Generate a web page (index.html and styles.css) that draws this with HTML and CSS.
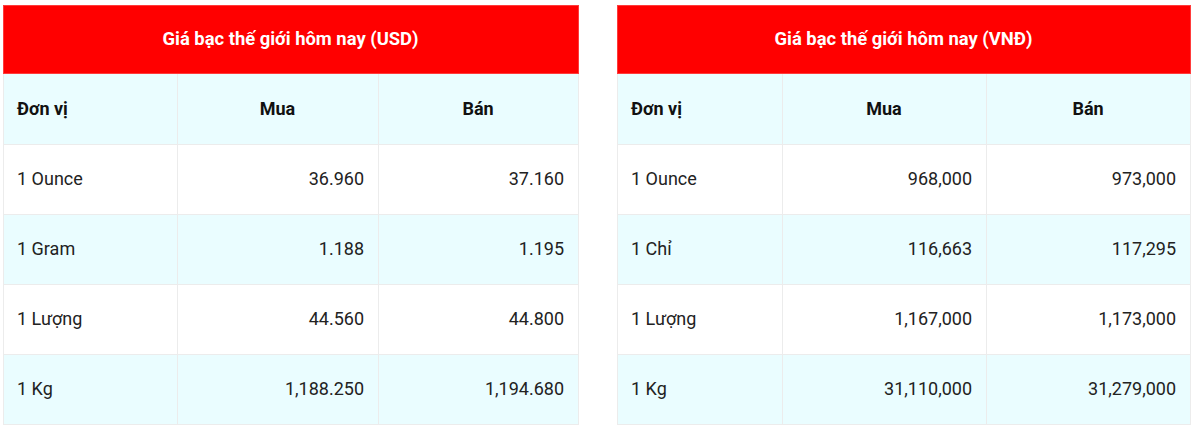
FILE: index.html
```html
<!DOCTYPE html>
<html lang="vi">
<head>
<meta charset="utf-8">
<title>Giá bạc thế giới hôm nay</title>
<link rel="stylesheet" href="styles.css">
</head>
<body>
<div class="wrap">
  <table class="price price-usd">
    <colgroup><col class="c1"><col class="c2"><col class="c3"></colgroup>
    <thead>
      <tr class="title-row"><th colspan="3" class="title">Giá bạc thế giới hôm nay (USD)</th></tr>
      <tr class="head-row alt"><th class="unit">Đơn vị</th><th>Mua</th><th>Bán</th></tr>
    </thead>
    <tbody>
      <tr><td>1 Ounce</td><td class="num">36.960</td><td class="num">37.160</td></tr>
      <tr class="alt"><td>1 Gram</td><td class="num">1.188</td><td class="num">1.195</td></tr>
      <tr><td>1 Lượng</td><td class="num">44.560</td><td class="num">44.800</td></tr>
      <tr class="alt"><td>1 Kg</td><td class="num">1,188.250</td><td class="num">1,194.680</td></tr>
    </tbody>
  </table>
  <table class="price price-vnd">
    <colgroup><col class="c1"><col class="c2"><col class="c3"></colgroup>
    <thead>
      <tr class="title-row"><th colspan="3" class="title">Giá bạc thế giới hôm nay (VNĐ)</th></tr>
      <tr class="head-row alt"><th class="unit">Đơn vị</th><th>Mua</th><th>Bán</th></tr>
    </thead>
    <tbody>
      <tr><td>1 Ounce</td><td class="num">968,000</td><td class="num">973,000</td></tr>
      <tr class="alt"><td>1 Chỉ</td><td class="num">116,663</td><td class="num">117,295</td></tr>
      <tr><td>1 Lượng</td><td class="num">1,167,000</td><td class="num">1,173,000</td></tr>
      <tr class="alt"><td>1 Kg</td><td class="num">31,110,000</td><td class="num">31,279,000</td></tr>
    </tbody>
  </table>
</div>
</body>
</html>
```
FILE: styles.css
```css
html, body {
  margin: 0;
  padding: 0;
  background: #ffffff;
}
body {
  font-family: Roboto, "Liberation Sans", Arial, sans-serif;
  font-size: 18px;
  color: #222222;
}
.wrap {
  display: flex;
  gap: 38px;
  padding: 5px 0 0 3px;
}
.price {
  border-collapse: collapse;
  table-layout: fixed;
}
.price-usd { width: 575px; }
.price-vnd { width: 573px; }
.price-usd .c1 { width: 174px; }
.price-usd .c2 { width: 201px; }
.price-usd .c3 { width: 200px; }
.price-vnd .c1 { width: 165px; }
.price-vnd .c2 { width: 204px; }
.price-vnd .c3 { width: 204px; }

.price th, .price td {
  border: 1px solid #ececec;
  padding: 0 14px 2px 13px;
  height: 70px;
  box-sizing: border-box;
  font-size: 18px;
}
.title-row th.title {
  background: #ff0000;
  border-color: #ff3b3b;
  color: #ffffff;
  font-weight: 700;
  text-align: center;
  height: 68px;
  font-size: 18.4px;
}
.head-row th {
  height: 71px;
  font-weight: 700;
  color: #111111;
  text-align: center;
}
.head-row th.unit { text-align: left; }
.price tr { background: #ffffff; }
.price tr.alt { background: #eafdff; }
.price td.num { text-align: right; }
```
